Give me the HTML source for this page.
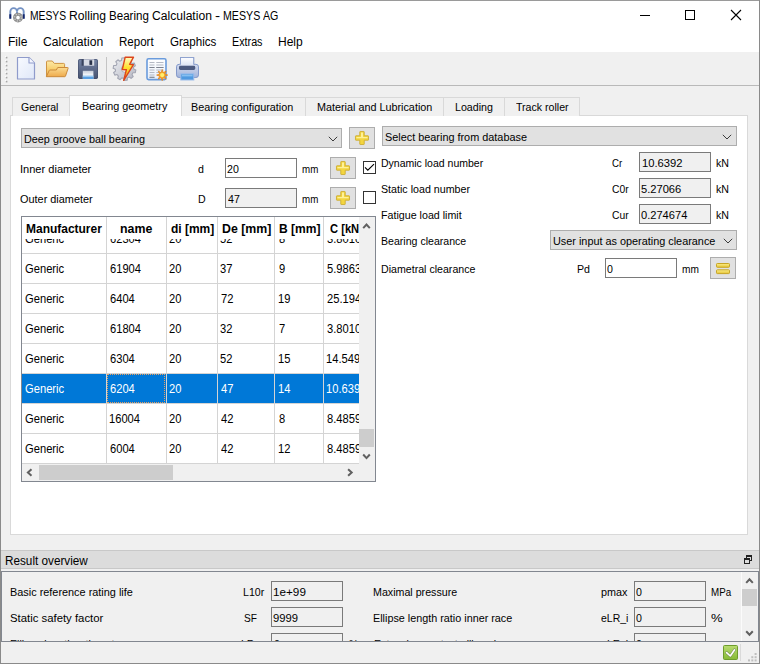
<!DOCTYPE html>
<html>
<head>
<meta charset="utf-8">
<title>MESYS Rolling Bearing Calculation - MESYS AG</title>
<style>
*{box-sizing:border-box;margin:0;padding:0}
html,body{width:760px;height:664px;overflow:hidden;background:#f0f0f0}
body{font-family:"Liberation Sans",sans-serif;font-size:11px;color:#000;position:relative}
.a{position:absolute;white-space:nowrap}
.t{position:absolute;white-space:nowrap;font-size:11px;line-height:14px;transform-origin:0 0}
.s{position:absolute;white-space:nowrap;font-size:12px;line-height:16px;transform-origin:0 0}
.b{position:absolute;white-space:nowrap;font-size:12px;line-height:16px;font-weight:bold;transform-origin:0 0}
.inp{position:absolute;height:20px;width:72px;border:1px solid #7a7a7a;background:#fff}
.ro{background:#f0f0f0}
.btn{position:absolute;border:1px solid #adadad;background:#e1e1e1}
.cmb{position:absolute;height:20px;border:1px solid #adadad;background:#e1e1e1}
.chk{position:absolute;width:13px;height:13px;border:1px solid #333;background:#fff}
.tab{position:absolute;top:97px;height:19px;border:1px solid #d9d9d9;border-bottom:none;background:#f0f0f0}
.clip{position:absolute;left:0;top:0;width:760px;height:664px}
.vl{position:absolute;top:217px;width:1px;height:247px;background:#d4d4d4;z-index:4}
.hl{position:absolute;left:22px;width:337px;height:1px;background:#d4d4d4}
</style>
</head>
<body>
<!-- title bar + menu -->
<div class="a" style="left:0;top:0;width:760px;height:52px;background:#fff"></div>
<!-- window border -->
<div class="a" style="left:0;top:0;width:760px;height:1px;background:#9a9a9a;z-index:50"></div>
<div class="a" style="left:0;top:0;width:1px;height:664px;background:#8a8a8a;z-index:50"></div>
<div class="a" style="left:759px;top:0;width:1px;height:664px;background:#8a8a8a;z-index:50"></div>
<div class="a" style="left:0;top:663px;width:760px;height:1px;background:#8a8a8a;z-index:50"></div>
<!-- app icon -->
<svg class="a" style="left:8px;top:5px" width="18" height="20" viewBox="0 0 18 20">
<path d="M2.3 13.5 V6.5 A3.35 3.35 0 0 1 9 6.5 A3.35 3.35 0 0 1 15.7 6.5 V13.5" fill="none" stroke="#7391c3" stroke-width="1.9"/>
<path d="M2.3 13.8 V9.3 M15.7 13.8 V9.3" fill="none" stroke="#14256a" stroke-width="1.9"/>
<path d="M9 6.5 V9" stroke="#7391c3" stroke-width="1.9"/>
<circle cx="10" cy="12.6" r="3.4" fill="none" stroke="#8f8f8f" stroke-width="3.1"/>
<circle cx="10" cy="12.6" r="3.4" fill="none" stroke="#c9c9c9" stroke-width="1.4" stroke-dasharray="1.2 1.47"/>
</svg>
<!-- window controls -->
<div class="a" style="left:640px;top:15px;width:10px;height:1px;background:#000"></div>
<div class="a" style="left:685px;top:10px;width:10px;height:10px;border:1px solid #000"></div>
<svg class="a" style="left:730px;top:9px" width="12" height="12" viewBox="0 0 12 12"><path d="M1 1 L11 11 M11 1 L1 11" stroke="#000" stroke-width="1.1" fill="none"/></svg>

<!-- toolbar -->
<div class="a" style="left:0;top:85px;width:760px;height:1px;background:#b9b9b9"></div>
<!-- toolbar handle -->
<svg class="a" style="left:4px;top:55px" width="5" height="29" viewBox="0 0 5 29"><rect x="1" y="1" width="1.4" height="1.4" fill="#fff"/><rect x="1.8" y="1.8" width="1.6" height="1.6" fill="#a6a6a6"/><rect x="1" y="5" width="1.4" height="1.4" fill="#fff"/><rect x="1.8" y="5.8" width="1.6" height="1.6" fill="#a6a6a6"/><rect x="1" y="9" width="1.4" height="1.4" fill="#fff"/><rect x="1.8" y="9.8" width="1.6" height="1.6" fill="#a6a6a6"/><rect x="1" y="13" width="1.4" height="1.4" fill="#fff"/><rect x="1.8" y="13.8" width="1.6" height="1.6" fill="#a6a6a6"/><rect x="1" y="17" width="1.4" height="1.4" fill="#fff"/><rect x="1.8" y="17.8" width="1.6" height="1.6" fill="#a6a6a6"/><rect x="1" y="21" width="1.4" height="1.4" fill="#fff"/><rect x="1.8" y="21.8" width="1.6" height="1.6" fill="#a6a6a6"/><rect x="1" y="25" width="1.4" height="1.4" fill="#fff"/><rect x="1.8" y="25.8" width="1.6" height="1.6" fill="#a6a6a6"/></svg>
<!-- new -->
<svg class="a" style="left:16px;top:56px" width="20" height="25" viewBox="0 0 20 25">
<defs><linearGradient id="gn" x1="0" y1="0" x2="1" y2="1"><stop offset="0" stop-color="#f8faff"/><stop offset="1" stop-color="#dfe7f8"/></linearGradient></defs>
<path d="M1.5 1.5 H13 L18.5 7 V23 H1.5 Z" fill="url(#gn)" stroke="#8f9bcb" stroke-width="1.2" stroke-linejoin="round"/>
<path d="M13 1.5 V7 H18.5" fill="#f4f6ff" stroke="#8f9bcb" stroke-width="1.1" stroke-linejoin="round"/>
</svg>
<!-- open -->
<svg class="a" style="left:45px;top:59px" width="25" height="20" viewBox="0 0 25 20">
<defs><linearGradient id="gf" x1="0" y1="0" x2="0" y2="1"><stop offset="0" stop-color="#fbdc92"/><stop offset="1" stop-color="#eeaa4c"/></linearGradient>
<linearGradient id="gb" x1="0" y1="0" x2="0" y2="1"><stop offset="0" stop-color="#fdeaa8"/><stop offset="0.5" stop-color="#f8d072"/><stop offset="1" stop-color="#f0b552"/></linearGradient></defs>
<path d="M1.5 17.5 V3 Q1.5 2 2.5 2 H7.3 L9.3 4.4 H18.6 Q19.6 4.4 19.6 5.4 V9 L1.5 17.5 Z" fill="url(#gb)" stroke="#cf9443" stroke-width="1" stroke-linejoin="round"/>
<path d="M1.3 17.7 L4.3 11.4 Q4.5 11 5 11 H11.3 L12.7 8.5 H22.6 Q23.4 8.5 23.1 9.3 L20.5 17.1 Q20.3 17.7 19.7 17.7 Z" fill="url(#gf)" stroke="#cb8a3a" stroke-width="1" stroke-linejoin="round"/>
</svg>
<!-- save -->
<svg class="a" style="left:77px;top:58px" width="22" height="22" viewBox="0 0 22 22">
<defs><linearGradient id="gs" x1="0" y1="0" x2="0" y2="1"><stop offset="0" stop-color="#7685a6"/><stop offset="1" stop-color="#46526f"/></linearGradient>
<linearGradient id="gsl" x1="0" y1="0" x2="0" y2="1"><stop offset="0" stop-color="#c7ceda"/><stop offset="0.5" stop-color="#f4f6fa"/><stop offset="1" stop-color="#e8edf5"/></linearGradient></defs>
<rect x="1" y="1" width="20" height="20" rx="1.8" fill="url(#gs)"/>
<rect x="1.5" y="1.5" width="19" height="19" rx="1.5" fill="none" stroke="#3f4a66" stroke-width="0.8" opacity="0.7"/>
<rect x="4.6" y="1.3" width="2.2" height="6.4" fill="#39435c"/>
<rect x="6.8" y="1.3" width="10.4" height="6.4" fill="#d7dbe4"/>
<rect x="12.4" y="2.3" width="2.8" height="4.6" fill="#2b344c"/>
<rect x="5.8" y="12.8" width="10.6" height="8.2" fill="url(#gsl)"/>
<rect x="5.8" y="17.8" width="10.6" height="3.2" fill="#5a9fe2"/>
<rect x="5.8" y="17.8" width="10.6" height="1.1" fill="#9fcbf2"/>
</svg>
<div class="a" style="left:106px;top:57px;width:1px;height:24px;background:#c4c4c4"></div>
<!-- calc: gear + lightning -->
<svg class="a" style="left:111px;top:55px" width="28" height="28" viewBox="0 0 28 28">
<defs><linearGradient id="gg" x1="0" y1="0" x2="1" y2="1"><stop offset="0" stop-color="#eceef2"/><stop offset="1" stop-color="#b4b6c2"/></linearGradient>
<linearGradient id="gl" x1="0" y1="0" x2="0" y2="1"><stop offset="0" stop-color="#fffbc4"/><stop offset="0.45" stop-color="#ffe12e"/><stop offset="1" stop-color="#f8931a"/></linearGradient></defs>
<path d="M22.70 14.03 L24.87 14.95 L24.30 17.75 L21.95 17.74 L20.98 19.45 L22.20 21.47 L20.09 23.40 L18.19 22.01 L16.41 22.83 L16.21 25.17 L13.37 25.50 L12.64 23.26 L10.72 22.87 L9.18 24.65 L6.69 23.25 L7.42 21.01 L6.10 19.56 L3.81 20.10 L2.62 17.50 L4.52 16.12 L4.30 14.17 L2.13 13.25 L2.70 10.45 L5.05 10.46 L6.02 8.75 L4.80 6.73 L6.91 4.80 L8.81 6.19 L10.59 5.37 L10.79 3.03 L13.63 2.70 L14.36 4.94 L16.28 5.33 L17.82 3.55 L20.31 4.95 L19.58 7.19 L20.90 8.64 L23.19 8.10 L24.38 10.70 L22.48 12.08 Z" fill="url(#gg)" stroke="#a3a6b3" stroke-width="1.1" stroke-linejoin="round"/>
<circle cx="13.5" cy="14.1" r="3.2" fill="#f0f0f0" stroke="#a7aab6" stroke-width="0.9"/>
<path d="M14.2 2.2 L22.5 2.2 L18.6 9.4 L22.4 9.7 L12.7 25.3 L15.4 14.7 L11.3 14.5 Z" fill="url(#gl)" stroke="#dc461b" stroke-width="1.4" stroke-linejoin="round"/>
</svg>
<!-- report -->
<svg class="a" style="left:146px;top:57px" width="23" height="25" viewBox="0 0 23 25">
<defs><linearGradient id="gr" x1="0" y1="0" x2="0" y2="1"><stop offset="0" stop-color="#ffffff"/><stop offset="1" stop-color="#e6eefa"/></linearGradient></defs>
<rect x="1" y="1.8" width="19" height="20.8" rx="1.6" fill="url(#gr)" stroke="#6a9bdc" stroke-width="1.6"/>
<g stroke="#b4b9c4" stroke-width="1"><path d="M3.5 5.5 H8.5 M10.3 5.5 H17.5 M3.5 8 H8.5 M10.3 8 H17.5 M3.5 10.5 H8.5 M10.3 10.5 H17.5 M3.5 13 H8.5 M10.3 13 H17.5 M3.5 15.5 H8.5 M10.3 15.5 H13 M3.5 18 H8.5 M3.5 20.3 H8.5"/></g>
<g stroke="#7d828e" stroke-width="1"><path d="M3.5 10.5 H8.5 M10.3 10.5 H17.5 M3.5 20.3 H8.5"/></g>
<g transform="translate(16.2,18.1)">
<path d="M0 -5.6 L1.1 -2.5 L4 -4 L2.5 -1.1 L5.6 0 L2.5 1.1 L4 4 L1.1 2.5 L0 5.6 L-1.1 2.5 L-4 4 L-2.5 1.1 L-5.6 0 L-2.5 -1.1 L-4 -4 L-1.1 -2.5 Z" fill="#f9ab26" stroke="#e07f1c" stroke-width="0.7"/>
<circle r="2.1" fill="#ffee6e"/>
</g>
</svg>
<!-- print -->
<svg class="a" style="left:175px;top:56px" width="25" height="25" viewBox="0 0 25 25">
<defs><linearGradient id="gp" x1="0" y1="0" x2="0" y2="1"><stop offset="0" stop-color="#d3dbef"/><stop offset="1" stop-color="#a3b4da"/></linearGradient>
<linearGradient id="gpp" x1="0" y1="0" x2="0" y2="1"><stop offset="0" stop-color="#fbfcff"/><stop offset="1" stop-color="#dde3f3"/></linearGradient></defs>
<rect x="5.5" y="1.5" width="13.2" height="10" fill="url(#gpp)" stroke="#90a3cf" stroke-width="1"/>
<rect x="1.5" y="8.3" width="22" height="13.2" rx="2.6" fill="url(#gp)" stroke="#8499ca" stroke-width="1"/>
<rect x="5.5" y="2.5" width="13.2" height="7" fill="url(#gpp)"/>
<path d="M5.5 8.5 V1.5 H18.700 V8.5" fill="none" stroke="#90a3cf" stroke-width="1"/>
<rect x="4" y="9.8" width="16.2" height="4.2" rx="1.4" fill="#4c5a80"/>
<rect x="5.8" y="17.8" width="13" height="6.2" fill="#509ae0" stroke="#9dbdea" stroke-width="1"/>
<rect x="7" y="18.6" width="10.6" height="1.8" fill="#86bff0"/>
</svg>
<!-- tab pane -->
<div class="a" style="left:10px;top:115px;width:738px;height:420px;background:#fff;border:1px solid #d9d9d9"></div>
<div class="tab" style="left:12px;width:58px"></div>
<div class="tab" style="left:181px;width:125px"></div>
<div class="tab" style="left:305px;width:139px"></div>
<div class="tab" style="left:443px;width:62px"></div>
<div class="tab" style="left:504px;width:76px"></div>
<div class="tab" style="left:69px;width:113px;top:95px;height:21px;background:#fff"></div>

<!-- form widgets -->
<div class="cmb" style="left:21px;top:128px;width:321px"></div>
<div class="btn" style="left:349px;top:127px;width:26px;height:22px"></div>
<div class="inp" style="left:225px;top:158px"></div>
<div class="btn" style="left:330px;top:157px;width:26px;height:22px"></div>
<div class="chk" style="left:363px;top:161px"></div>
<div class="inp ro" style="left:225px;top:188px"></div>
<div class="btn" style="left:330px;top:187px;width:26px;height:22px"></div>
<div class="chk" style="left:363px;top:191px"></div>
<div class="cmb" style="left:382px;top:126px;width:355px"></div>
<div class="inp ro" style="left:639px;top:152px"></div>
<div class="inp ro" style="left:639px;top:178px"></div>
<div class="inp ro" style="left:639px;top:204px"></div>
<div class="cmb" style="left:550px;top:230px;width:187px"></div>
<div class="inp" style="left:605px;top:258px"></div>
<div class="btn" style="left:710px;top:257px;width:26px;height:22px"></div>

<!-- dock title -->
<div class="a" style="left:0;top:550px;width:760px;height:19px;background:#dcdcdc;border-top:1px solid #c8c8c8;border-bottom:1px solid #c8c8c8"></div>

<!-- table -->
<div class="a" style="left:21px;top:216px;width:355px;height:266px;border:1px solid #828790;background:#fff"></div>
<div class="clip" style="clip-path:inset(217px 401px 200px 22px)">
<div class="a" style="left:22px;top:374px;width:337px;height:29px;background:#0078d7"></div>
<div class="s" style="left:25.08px;top:231px;transform:scaleX(0.9321);">Generic</div>
<div class="s" style="left:109.68px;top:231px;transform:scaleX(0.9300);">62304</div>
<div class="s" style="left:169.49px;top:231px;transform:scaleX(0.9300);">20</div>
<div class="s" style="left:220.42px;top:231px;transform:scaleX(0.9300);">52</div>
<div class="s" style="left:278.74px;top:231px;transform:scaleX(0.9300);">8</div>
<div class="s" style="left:326.86px;top:231px;transform:scaleX(0.9300);">3.8010</div>
<div class="s" style="left:25.08px;top:261px;transform:scaleX(0.9321);">Generic</div>
<div class="s" style="left:109.68px;top:261px;transform:scaleX(0.9300);">61904</div>
<div class="s" style="left:169.49px;top:261px;transform:scaleX(0.9300);">20</div>
<div class="s" style="left:220.46px;top:261px;transform:scaleX(0.9300);">37</div>
<div class="s" style="left:278.68px;top:261px;transform:scaleX(0.9300);">9</div>
<div class="s" style="left:326.82px;top:261px;transform:scaleX(0.9300);">5.9863</div>
<div class="s" style="left:25.08px;top:291px;transform:scaleX(0.9321);">Generic</div>
<div class="s" style="left:109.68px;top:291px;transform:scaleX(0.9300);">6404</div>
<div class="s" style="left:169.49px;top:291px;transform:scaleX(0.9300);">20</div>
<div class="s" style="left:220.51px;top:291px;transform:scaleX(0.9300);">72</div>
<div class="s" style="left:278.29px;top:291px;transform:scaleX(0.9300);">19</div>
<div class="s" style="left:326.89px;top:291px;transform:scaleX(0.9300);">25.194</div>
<div class="s" style="left:25.08px;top:321px;transform:scaleX(0.9321);">Generic</div>
<div class="s" style="left:109.68px;top:321px;transform:scaleX(0.9300);">61804</div>
<div class="s" style="left:169.49px;top:321px;transform:scaleX(0.9300);">20</div>
<div class="s" style="left:220.46px;top:321px;transform:scaleX(0.9300);">32</div>
<div class="s" style="left:278.71px;top:321px;transform:scaleX(0.9300);">7</div>
<div class="s" style="left:326.86px;top:321px;transform:scaleX(0.9300);">3.8010</div>
<div class="s" style="left:25.08px;top:351px;transform:scaleX(0.9321);">Generic</div>
<div class="s" style="left:109.68px;top:351px;transform:scaleX(0.9300);">6304</div>
<div class="s" style="left:169.49px;top:351px;transform:scaleX(0.9300);">20</div>
<div class="s" style="left:220.42px;top:351px;transform:scaleX(0.9300);">52</div>
<div class="s" style="left:278.29px;top:351px;transform:scaleX(0.9300);">15</div>
<div class="s" style="left:326.49px;top:351px;transform:scaleX(0.9300);">14.549</div>
<div class="s" style="left:25.08px;top:381px;transform:scaleX(0.9321);color:#fff;">Generic</div>
<div class="s" style="left:109.68px;top:381px;transform:scaleX(0.9300);color:#fff;">6204</div>
<div class="s" style="left:169.49px;top:381px;transform:scaleX(0.9300);color:#fff;">20</div>
<div class="s" style="left:220.78px;top:381px;transform:scaleX(0.9300);color:#fff;">47</div>
<div class="s" style="left:278.29px;top:381px;transform:scaleX(0.9300);color:#fff;">14</div>
<div class="s" style="left:326.49px;top:381px;transform:scaleX(0.9300);color:#fff;">10.639</div>
<div class="s" style="left:25.08px;top:411px;transform:scaleX(0.9321);">Generic</div>
<div class="s" style="left:109.29px;top:411px;transform:scaleX(0.9300);">16004</div>
<div class="s" style="left:169.49px;top:411px;transform:scaleX(0.9300);">20</div>
<div class="s" style="left:220.78px;top:411px;transform:scaleX(0.9300);">42</div>
<div class="s" style="left:278.74px;top:411px;transform:scaleX(0.9300);">8</div>
<div class="s" style="left:326.94px;top:411px;transform:scaleX(0.9300);">8.4859</div>
<div class="s" style="left:25.08px;top:441px;transform:scaleX(0.9321);">Generic</div>
<div class="s" style="left:109.68px;top:441px;transform:scaleX(0.9300);">6004</div>
<div class="s" style="left:169.49px;top:441px;transform:scaleX(0.9300);">20</div>
<div class="s" style="left:220.78px;top:441px;transform:scaleX(0.9300);">42</div>
<div class="s" style="left:278.29px;top:441px;transform:scaleX(0.9300);">12</div>
<div class="s" style="left:326.94px;top:441px;transform:scaleX(0.9300);">8.4859</div>
<div class="b" style="left:330.00px;top:221px;transform:scaleX(0.9300);z-index:3">C [kN]</div>
<div class="hl" style="top:253px"></div><div class="hl" style="top:283px"></div><div class="hl" style="top:313px"></div><div class="hl" style="top:343px"></div><div class="hl" style="top:373px"></div><div class="hl" style="top:403px"></div><div class="hl" style="top:433px"></div><div class="hl" style="top:463px"></div>
<div class="a" style="left:22px;top:217px;width:337px;height:22px;background:#fff;z-index:2"></div>
<div class="vl" style="left:106px"></div><div class="vl" style="left:166px"></div><div class="vl" style="left:217px"></div><div class="vl" style="left:274px"></div><div class="vl" style="left:323px"></div>
<div class="a" style="left:107px;top:374px;width:58px;height:29px;border:1px dotted #e8a060;z-index:5"></div>
</div>
<!-- table scrollbars -->
<div class="a" style="left:359px;top:217px;width:16px;height:247px;background:#f0f0f0"></div>
<div class="a" style="left:359px;top:429px;width:15px;height:18px;background:#cdcdcd"></div>
<div class="a" style="left:22px;top:464px;width:353px;height:17px;background:#f0f0f0"></div>
<div class="a" style="left:39px;top:465px;width:134px;height:15px;background:#cdcdcd"></div>

<svg class="a" style="left:0;top:0" width="760" height="664" viewBox="0 0 760 664"><polyline points="363.20,228.10 366.50,224.50 369.80,228.10" fill="none" stroke="#606060" stroke-width="2.0"/></svg>
<svg class="a" style="left:0;top:0" width="760" height="664" viewBox="0 0 760 664"><polyline points="363.20,454.50 366.50,458.10 369.80,454.50" fill="none" stroke="#606060" stroke-width="2.0"/></svg>
<svg class="a" style="left:0;top:0" width="760" height="664" viewBox="0 0 760 664"><polyline points="31.50,469.20 27.90,472.50 31.50,475.80" fill="none" stroke="#606060" stroke-width="2.0"/></svg>
<svg class="a" style="left:0;top:0" width="760" height="664" viewBox="0 0 760 664"><polyline points="348.10,469.20 351.70,472.50 348.10,475.80" fill="none" stroke="#606060" stroke-width="2.0"/></svg>

<!-- text -->
<div class="s" style="left:30.04px;top:8px;transform:scaleX(0.8592);">MESYS</div>
<div class="s" style="left:68.67px;top:8px;transform:scaleX(1.0110);">Rolling</div>
<div class="s" style="left:108.62px;top:8px;transform:scaleX(0.9634);">Bearing</div>
<div class="s" style="left:151.84px;top:8px;transform:scaleX(1.0084);">Calculation</div>
<div class="s" style="left:214.54px;top:8px;transform:scaleX(1.2733);">-</div>
<div class="s" style="left:222.71px;top:8px;transform:scaleX(0.8865);">MESYS</div>
<div class="s" style="left:262.71px;top:8px;transform:scaleX(0.8893);">AG</div>
<div class="s" style="left:8.38px;top:34px;transform:scaleX(1.0033);">File</div>
<div class="s" style="left:42.83px;top:34px;transform:scaleX(1.0136);">Calculation</div>
<div class="s" style="left:118.52px;top:34px;transform:scaleX(0.9619);">Report</div>
<div class="s" style="left:169.76px;top:34px;transform:scaleX(0.9657);">Graphics</div>
<div class="s" style="left:231.50px;top:34px;transform:scaleX(0.8966);">Extras</div>
<div class="s" style="left:277.68px;top:34px;transform:scaleX(1.0019);">Help</div>
<div class="t" style="left:21.17px;top:100px;transform:scaleX(0.9561);">General</div>
<div class="t" style="left:81.68px;top:99px;transform:scaleX(0.9825);">Bearing geometry</div>
<div class="t" style="left:190.93px;top:100px;transform:scaleX(0.9835);">Bearing configuration</div>
<div class="t" style="left:316.68px;top:100px;transform:scaleX(0.9821);">Material and Lubrication</div>
<div class="t" style="left:454.69px;top:100px;transform:scaleX(0.9699);">Loading</div>
<div class="t" style="left:516.27px;top:100px;transform:scaleX(0.9642);">Track roller</div>
<div class="t" style="left:23.68px;top:132px;transform:scaleX(0.9842);">Deep groove ball bearing</div>
<div class="t" style="left:19.75px;top:162px;transform:scaleX(1.0052);">Inner diameter</div>
<div class="t" style="left:19.92px;top:192px;transform:scaleX(0.9908);">Outer diameter</div>
<div class="t" style="left:198.19px;top:162px;transform:scaleX(0.9650);">d</div>
<div class="t" style="left:197.95px;top:192px;transform:scaleX(0.9650);">D</div>
<div class="t" style="left:227.42px;top:162px;transform:scaleX(0.9650);">20</div>
<div class="t" style="left:227.69px;top:192px;transform:scaleX(0.9650);">47</div>
<div class="t" style="left:302.34px;top:162px;transform:scaleX(0.8869);">mm</div>
<div class="t" style="left:302.34px;top:192px;transform:scaleX(0.8869);">mm</div>
<div class="t" style="left:384.77px;top:130px;transform:scaleX(0.9878);">Select bearing from database</div>
<div class="t" style="left:380.71px;top:156px;transform:scaleX(0.9551);">Dynamic load number</div>
<div class="t" style="left:380.78px;top:182px;transform:scaleX(0.9703);">Static load number</div>
<div class="t" style="left:380.94px;top:208px;transform:scaleX(0.9707);">Fatigue load limit</div>
<div class="t" style="left:380.95px;top:234px;transform:scaleX(0.9611);">Bearing clearance</div>
<div class="t" style="left:380.95px;top:262px;transform:scaleX(0.9654);">Diametral clearance</div>
<div class="t" style="left:612.44px;top:156px;transform:scaleX(0.8799);">Cr</div>
<div class="t" style="left:612.41px;top:182px;transform:scaleX(0.9377);">C0r</div>
<div class="t" style="left:612.41px;top:208px;transform:scaleX(0.9377);">Cur</div>
<div class="t" style="left:641.89px;top:156px;transform:scaleX(1.0207);">10.6392</div>
<div class="t" style="left:641.32px;top:182px;transform:scaleX(1.0125);">5.27066</div>
<div class="t" style="left:641.46px;top:208px;transform:scaleX(1.0094);">0.274674</div>
<div class="t" style="left:716.04px;top:156px;transform:scaleX(0.9681);">kN</div>
<div class="t" style="left:716.04px;top:182px;transform:scaleX(0.9681);">kN</div>
<div class="t" style="left:716.04px;top:208px;transform:scaleX(0.9681);">kN</div>
<div class="t" style="left:552.81px;top:234px;transform:scaleX(0.9870);">User input as operating clearance</div>
<div class="t" style="left:577.40px;top:262px;transform:scaleX(0.9650);">Pd</div>
<div class="t" style="left:607.48px;top:262px;transform:scaleX(0.9650);">0</div>
<div class="t" style="left:681.71px;top:262px;transform:scaleX(0.9223);">mm</div>
<div class="s" style="left:5.21px;top:553px;transform:scaleX(0.9773);">Result overview</div>
<div class="b" style="left:26.43px;top:221px;transform:scaleX(0.9978);z-index:3">Manufacturer</div>
<div class="b" style="left:120.18px;top:221px;transform:scaleX(1.0300);z-index:3">name</div>
<div class="b" style="left:170.93px;top:221px;transform:scaleX(0.9983);z-index:3">di [mm]</div>
<div class="b" style="left:221.71px;top:221px;transform:scaleX(1.0288);z-index:3">De [mm]</div>
<div class="b" style="left:278.73px;top:221px;transform:scaleX(1.0031);z-index:3">B [mm]</div>
<!-- small icons -->
<svg class="a" style="left:354px;top:130px" width="16" height="16" viewBox="0 0 16 16"><path d="M5.6 1.5 Q5.6 1 6.1 1 H9.9 Q10.4 1 10.4 1.5 V5.6 H14.5 Q15 5.6 15 6.1 V9.9 Q15 10.4 14.5 10.4 H10.4 V14.5 Q10.4 15 9.9 15 H6.1 Q5.6 15 5.6 14.5 V10.4 H1.5 Q1 10.4 1 9.9 V6.1 Q1 5.6 1.5 5.6 H5.6 Z" fill="#f3d53f" stroke="#cbaa2c" stroke-width="0.9" transform="translate(8 8) scale(0.93) translate(-8 -8)"/><path d="M7 2.4 H9 V7 H13.6 V8.2 H7 Z M2.4 7 H7 V8.2 H2.4 Z" fill="#fff6a8" opacity="0.85"/></svg><svg class="a" style="left:335px;top:160px" width="16" height="16" viewBox="0 0 16 16"><path d="M5.6 1.5 Q5.6 1 6.1 1 H9.9 Q10.4 1 10.4 1.5 V5.6 H14.5 Q15 5.6 15 6.1 V9.9 Q15 10.4 14.5 10.4 H10.4 V14.5 Q10.4 15 9.9 15 H6.1 Q5.6 15 5.6 14.5 V10.4 H1.5 Q1 10.4 1 9.9 V6.1 Q1 5.6 1.5 5.6 H5.6 Z" fill="#f3d53f" stroke="#cbaa2c" stroke-width="0.9" transform="translate(8 8) scale(0.93) translate(-8 -8)"/><path d="M7 2.4 H9 V7 H13.6 V8.2 H7 Z M2.4 7 H7 V8.2 H2.4 Z" fill="#fff6a8" opacity="0.85"/></svg><svg class="a" style="left:335px;top:190px" width="16" height="16" viewBox="0 0 16 16"><path d="M5.6 1.5 Q5.6 1 6.1 1 H9.9 Q10.4 1 10.4 1.5 V5.6 H14.5 Q15 5.6 15 6.1 V9.9 Q15 10.4 14.5 10.4 H10.4 V14.5 Q10.4 15 9.9 15 H6.1 Q5.6 15 5.6 14.5 V10.4 H1.5 Q1 10.4 1 9.9 V6.1 Q1 5.6 1.5 5.6 H5.6 Z" fill="#f3d53f" stroke="#cbaa2c" stroke-width="0.9" transform="translate(8 8) scale(0.93) translate(-8 -8)"/><path d="M7 2.4 H9 V7 H13.6 V8.2 H7 Z M2.4 7 H7 V8.2 H2.4 Z" fill="#fff6a8" opacity="0.85"/></svg><svg class="a" style="left:328px;top:136px" width="10" height="6" viewBox="0 0 10 6"><path d="M0.8 0.8 L5 5 L9.2 0.8" fill="none" stroke="#3c3c3c" stroke-width="1"/></svg><svg class="a" style="left:722px;top:134px" width="10" height="6" viewBox="0 0 10 6"><path d="M0.8 0.8 L5 5 L9.2 0.8" fill="none" stroke="#3c3c3c" stroke-width="1"/></svg><svg class="a" style="left:723px;top:238px" width="10" height="6" viewBox="0 0 10 6"><path d="M0.8 0.8 L5 5 L9.2 0.8" fill="none" stroke="#3c3c3c" stroke-width="1"/></svg><svg class="a" style="left:363px;top:161px" width="13" height="13" viewBox="0 0 13 13"><path d="M2 6.4 L4.8 9.2 L11 3.2" fill="none" stroke="#000" stroke-width="1.1"/></svg><svg class="a" style="left:714px;top:260px" width="18" height="16" viewBox="0 0 18 16"><defs><linearGradient id="ge" x1="0" y1="0" x2="0" y2="1"><stop offset="0" stop-color="#fbee8c"/><stop offset="1" stop-color="#e6c432"/></linearGradient></defs><rect x="2.5" y="3.5" width="13" height="3.8" rx="0.8" fill="url(#ge)" stroke="#c7a526" stroke-width="1"/><rect x="2.5" y="9.8" width="13" height="3.8" rx="0.8" fill="url(#ge)" stroke="#c7a526" stroke-width="1"/></svg>

<!-- result frame -->
<div class="a" style="left:1px;top:571px;width:758px;height:71px;border:1px solid #828790;background:#f0f0f0"></div>
<div class="a" style="left:741px;top:572px;width:1px;height:69px;background:#fbfbfb"></div>
<div class="clip" style="clip-path:inset(572px 2px 23px 2px)">
<div class="inp ro" style="left:271px;top:581px"></div>
<div class="inp ro" style="left:271px;top:607px"></div>
<div class="inp ro" style="left:271px;top:633px"></div>
<div class="inp ro" style="left:634px;top:581px"></div>
<div class="inp ro" style="left:634px;top:607px"></div>
<div class="inp ro" style="left:634px;top:633px"></div>
<div class="t" style="left:9.68px;top:585px;transform:scaleX(0.9894);">Basic reference rating life</div>
<div class="t" style="left:9.74px;top:611px;transform:scaleX(1.0312);">Static safety factor</div>
<div class="t" style="left:9.70px;top:637px;transform:scaleX(0.9650);">Ellipse length ratio outer race</div>
<div class="t" style="left:242.95px;top:585px;transform:scaleX(0.9637);">L10r</div>
<div class="t" style="left:243.82px;top:611px;transform:scaleX(0.9219);">SF</div>
<div class="t" style="left:234.94px;top:637px;transform:scaleX(0.9650);">eLR_e</div>
<div class="t" style="left:273.13px;top:585px;transform:scaleX(1.0649);">1e+99</div>
<div class="t" style="left:273.13px;top:611px;transform:scaleX(1.0249);">9999</div>
<div class="t" style="left:273.98px;top:637px;transform:scaleX(0.9650);">0</div>
<div class="t" style="left:349.01px;top:637px;transform:scaleX(0.9650);">%</div>
<div class="t" style="left:373.19px;top:585px;transform:scaleX(0.9697);">Maximal pressure</div>
<div class="t" style="left:373.18px;top:611px;transform:scaleX(0.9816);">Ellipse length ratio inner race</div>
<div class="t" style="left:373.70px;top:637px;transform:scaleX(0.9650);">Extension contact ellipse inner race</div>
<div class="t" style="left:600.88px;top:585px;transform:scaleX(0.9832);">pmax</div>
<div class="t" style="left:601.05px;top:611px;transform:scaleX(0.9502);">eLR_i</div>
<div class="t" style="left:601.04px;top:637px;transform:scaleX(0.9650);">eLE_i</div>
<div class="t" style="left:636.48px;top:585px;transform:scaleX(0.9650);">0</div>
<div class="t" style="left:636.48px;top:611px;transform:scaleX(0.9650);">0</div>
<div class="t" style="left:636.48px;top:637px;transform:scaleX(0.9650);">0</div>
<div class="t" style="left:711.06px;top:585px;transform:scaleX(0.8874);">MPa</div>
<div class="t" style="left:711.40px;top:611px;transform:scaleX(1.1887);">%</div>
<div class="a" style="left:742px;top:589px;width:15px;height:17px;background:#cdcdcd"></div>
<svg class="a" style="left:0;top:0" width="760" height="664" viewBox="0 0 760 664"><polyline points="746.20,582.90 749.50,579.30 752.80,582.90" fill="none" stroke="#606060" stroke-width="2.0"/></svg>
<svg class="a" style="left:0;top:0" width="760" height="664" viewBox="0 0 760 664"><polyline points="746.20,631.20 749.50,634.80 752.80,631.20" fill="none" stroke="#606060" stroke-width="2.0"/></svg>
</div>
<!-- float btn -->
<svg class="a" style="left:743px;top:554px" width="10" height="11" viewBox="0 0 10 11"><rect x="3.5" y="1.5" width="5" height="5" fill="#dcdcdc" stroke="#222" stroke-width="1"/><rect x="3" y="1" width="6" height="2" fill="#222"/><rect x="1.5" y="4.5" width="5" height="5" fill="#dcdcdc" stroke="#222" stroke-width="1"/><rect x="1" y="4" width="6" height="2" fill="#222"/></svg>
<!-- status icons -->
<svg class="a" style="left:722px;top:644px" width="17" height="17" viewBox="0 0 17 17"><defs><linearGradient id="gk" x1="0" y1="0" x2="0" y2="1"><stop offset="0" stop-color="#b9dc70"/><stop offset="1" stop-color="#86ba36"/></linearGradient></defs><rect x="1.5" y="1.5" width="14" height="14" rx="1" fill="url(#gk)" stroke="#6d9d2c" stroke-width="1"/><path d="M4.6 8.6 L8.3 12 L12.6 5.8" fill="none" stroke="#6f7f58" stroke-width="2.8" stroke-linejoin="round" stroke-linecap="round" opacity="0.75"/><path d="M4.6 8.6 L8.3 12 L12.6 5.8" fill="none" stroke="#ffffff" stroke-width="1.6" stroke-linejoin="round" stroke-linecap="round"/></svg>
<div class="a" style="left:740px;top:644px;width:1px;height:17px;background:#dadada"></div>
<svg class="a" style="left:748px;top:653px" width="10" height="10" viewBox="0 0 10 10"><g fill="#bfbfbf"><rect x="6.6" y="0" width="2" height="2"/><rect x="3.3" y="3.2" width="2" height="2"/><rect x="6.6" y="3.2" width="2" height="2"/><rect x="0" y="6.4" width="2" height="2"/><rect x="3.3" y="6.4" width="2" height="2"/><rect x="6.6" y="6.4" width="2" height="2"/></g></svg>
</body>
</html>
